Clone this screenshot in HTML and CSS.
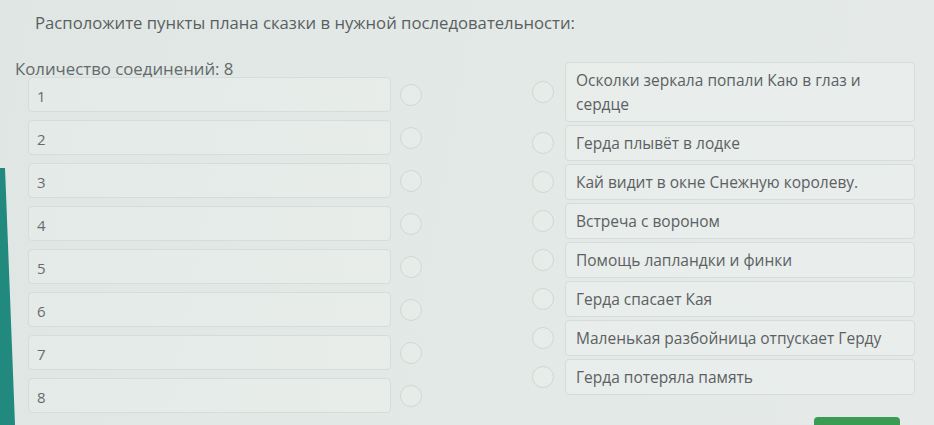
FILE: index.html
```html
<!DOCTYPE html>
<html lang="ru">
<head>
<meta charset="utf-8">
<title>Соединения</title>
<link rel="stylesheet" href="styles.css">
</head>
<body>
<div class="page">
  <div class="edge"></div>
  <main class="main">
    <h1 class="title">Расположите пункты плана сказки в нужной последовательности:</h1>
    <div class="count">Количество соединений: 8</div>
    <div class="match">
      <div class="left">
        <div class="lrow"><div class="lbox">1</div><span class="dot"></span></div>
        <div class="lrow"><div class="lbox">2</div><span class="dot"></span></div>
        <div class="lrow"><div class="lbox">3</div><span class="dot"></span></div>
        <div class="lrow"><div class="lbox">4</div><span class="dot"></span></div>
        <div class="lrow"><div class="lbox">5</div><span class="dot"></span></div>
        <div class="lrow"><div class="lbox">6</div><span class="dot"></span></div>
        <div class="lrow"><div class="lbox">7</div><span class="dot"></span></div>
        <div class="lrow"><div class="lbox">8</div><span class="dot"></span></div>
      </div>
      <div class="right">
        <div class="rrow"><span class="dot"></span><div class="rbox">Осколки зеркала попали Каю в глаз и сердце</div></div>
        <div class="rrow"><span class="dot"></span><div class="rbox">Герда плывёт в лодке</div></div>
        <div class="rrow"><span class="dot"></span><div class="rbox">Кай видит в окне Снежную королеву.</div></div>
        <div class="rrow"><span class="dot"></span><div class="rbox">Встреча с вороном</div></div>
        <div class="rrow"><span class="dot"></span><div class="rbox">Помощь лапландки и финки</div></div>
        <div class="rrow"><span class="dot"></span><div class="rbox">Герда спасает Кая</div></div>
        <div class="rrow"><span class="dot"></span><div class="rbox">Маленькая разбойница отпускает Герду</div></div>
        <div class="rrow"><span class="dot"></span><div class="rbox">Герда потеряла память</div></div>
      </div>
    </div>
    <div class="footer"><button class="btn" type="button"></button></div>
  </main>
</div>
</body>
</html>
```
FILE: styles.css
```css
html, body {
  margin: 0;
  padding: 0;
  height: 425px;
  overflow: hidden;
}
body {
  background: linear-gradient(100deg, #dfe6e3 0%, #e3e9e6 50%, #e5eae8 100%);
  font-family: "Open Sans", "Noto Sans", sans-serif;
  color: #5b6163;
}
.page {
  display: flex;
  height: 425px;
}
.edge {
  flex: 0 0 15px;
  background: #21897d;
  clip-path: polygon(0 168px, 5px 168px, 15px 100%, 0 100%);
}
.main {
  flex: 1;
  display: flex;
  flex-direction: column;
  min-width: 0;
}
.title {
  margin: 12px 0 0 20px;
  font-size: 16.7px;
  font-weight: 400;
  line-height: 22px;
  color: #5a5f61;
}
.count {
  margin: 24px 0 0 0;
  font-size: 16.8px;
  line-height: 22px;
  color: #636a6c;
}
.match {
  display: flex;
  margin-top: -18px;
}
.left {
  display: flex;
  flex-direction: column;
  gap: 8px;
  margin-left: 13px;
  padding-top: 15px;
}
.lrow {
  display: flex;
  align-items: center;
  gap: 9px;
}
.lbox {
  width: 353px;
  height: 33px;
  border: 1px solid #d5dcd9;
  border-radius: 4px;
  background: rgba(255, 255, 255, 0.18);
  padding-left: 8px;
  font-size: 15px;
  line-height: 36px;
  color: #666c6e;
  box-sizing: content-box;
}
.dot {
  flex: 0 0 auto;
  width: 20px;
  height: 20px;
  border: 1.5px solid #d0d7d4;
  border-radius: 50%;
  background: rgba(255, 255, 255, 0.15);
}
.right {
  display: flex;
  flex-direction: column;
  gap: 3px;
  margin-left: 110px;
}
.rrow {
  display: flex;
  align-items: center;
  gap: 11px;
}
.rbox {
  width: 328px;
  padding: 5px 10px;
  border: 1px solid #d5dcd9;
  border-radius: 4px;
  background: rgba(255, 255, 255, 0.18);
  font-size: 15.5px;
  line-height: 24px;
  color: #5b6163;
}
.footer {
  display: flex;
  justify-content: flex-end;
  padding-right: 34px;
  margin-top: 4px;
}
.btn {
  width: 86px;
  height: 36px;
  border: none;
  border-radius: 4px;
  background: #3a9b52;
}
```
